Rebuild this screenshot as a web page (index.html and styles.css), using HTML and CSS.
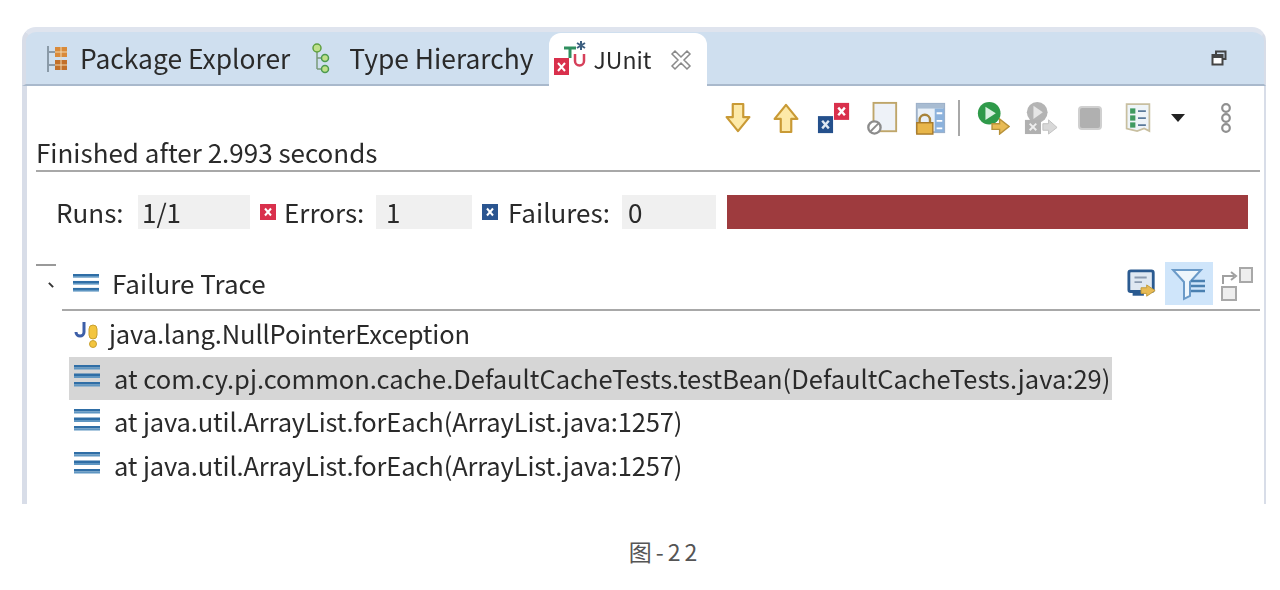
FILE: index.html
```html
<!DOCTYPE html>
<html lang="zh">
<head>
<meta charset="utf-8">
<title>JUnit</title>
<link rel="stylesheet" href="styles.css">
</head>
<body>
<svg class="defs" width="0" height="0" aria-hidden="true">
  <symbol id="lines" viewBox="0 0 26 22" preserveAspectRatio="none">
    <rect x="0" y="0" width="26" height="2.500" fill="#2f6ea6"/>
    <rect x="0" y="2.500" width="26" height="2" fill="#5f96c2"/>
    <rect x="0" y="8.500" width="26" height="2.500" fill="#2f6ea6"/>
    <rect x="0" y="11" width="26" height="2" fill="#5f96c2"/>
    <rect x="0" y="17" width="26" height="2.500" fill="#2f6ea6"/>
    <rect x="0" y="19.500" width="26" height="2" fill="#5f96c2"/>
  </symbol>
  <symbol id="xred" viewBox="0 0 16 16">
    <rect width="16" height="16" fill="#d9304c"/>
    <path d="M5 4.500l6 7M11 4.500l-6 7" stroke="#fff" stroke-width="2"/>
  </symbol>
  <symbol id="xblue" viewBox="0 0 16 16">
    <rect width="16" height="16" fill="#2a5590"/>
    <path d="M5 4.500l6 7M11 4.500l-6 7" stroke="#fff" stroke-width="2"/>
  </symbol>
</svg>
<main class="view">
  <div class="tabbar">
    <div class="tab">
      <svg class="ti ti-pkg" width="22" height="28" viewBox="0 0 22 28"><path d="M2 1v26M2 7h8M2 20h8" stroke="#8a9aa8" stroke-width="2" fill="none"/><rect x="9" y="2" width="12" height="10" fill="#d98a3a"/><rect x="9" y="15" width="12" height="10" fill="#c2702a"/><path d="M15 2v23M9 7h12M9 20h12" stroke="#f0d8b0"/></svg>
      <span>Package Explorer</span>
    </div>
    <div class="tab">
      <svg class="ti ti-type" width="20" height="32" viewBox="0 0 20 32"><path d="M6 6v20M6 15h7M6 26h7" stroke="#7a9a7a" stroke-width="1.500" fill="none"/><circle cx="6" cy="5" r="4" fill="#bfe08a" stroke="#5fa040" stroke-width="1.500"/><circle cx="14" cy="15" r="3.500" fill="#bfe08a" stroke="#4c9a50" stroke-width="1.500"/><circle cx="14" cy="26" r="3.500" fill="#bfe08a" stroke="#4c9a50" stroke-width="1.500"/></svg>
      <span>Type Hierarchy</span>
    </div>
    <div class="tab active">
      <svg class="ti junit" width="34" height="36" viewBox="0 0 34 36"><rect x="0" y="18" width="15" height="17" fill="#d9304c"/><path d="M4 23l7 8M11 23l-7 8" stroke="#fff" stroke-width="2"/><path d="M10 8h12M16 8v10" stroke="#2f8f5f" stroke-width="3" fill="none"/><path d="M21 14v7a4.500 4.500 0 0 0 9 0v-7" stroke="#d6405a" stroke-width="2.500" fill="none"/><path d="M27 1v9M23 3l8 5M31 3l-8 5" stroke="#3c5f80" stroke-width="2"/></svg>
      <span class="jtext">JUnit</span>
      <svg class="close" width="22" height="22" viewBox="0 0 22 22"><path d="M2 5l3-3 6 6 6-6 3 3-6 6 6 6-3 3-6-6-6 6-3-3 6-6z" fill="none" stroke="#8a8a8a" stroke-width="1.500"/></svg>
    </div>
    <svg class="restore" width="16" height="16" viewBox="0 0 16 16"><path d="M5 4V1.500h9.500V9H12" fill="none" stroke="#444" stroke-width="2"/><rect x="1.500" y="5" width="10" height="9.500" fill="#fff" stroke="#444" stroke-width="2"/><rect x="1.500" y="5" width="10" height="3" fill="#444"/></svg>
  </div>
  <div class="body">
    <div class="toolbar">
      <span class="slot"><svg width="28" height="32" viewBox="0 0 32 36"><path d="M10 2h12v15h7L16 33 3 17h7z" fill="#fde9a8" stroke="#c99a35" stroke-width="2.500" stroke-linejoin="round"/></svg></span>
      <span class="slot"><svg width="28" height="32" viewBox="0 0 32 36"><path d="M10 34h12V19h7L16 3 3 19h7z" fill="#fde9a8" stroke="#c99a35" stroke-width="2.500" stroke-linejoin="round"/></svg></span>
      <span class="slot"><svg width="34" height="34" viewBox="0 0 36 36"><rect x="1" y="16" width="16" height="18" fill="#24508c"/><path d="M5.500 21l7 8M12.500 21l-7 8" stroke="#dfe8f2" stroke-width="2.500"/><rect x="18" y="2" width="16" height="18" fill="#d9304c"/><path d="M22.500 7l7 8M29.500 7l-7 8" stroke="#fff" stroke-width="2.500"/></svg></span>
      <span class="slot"><svg width="32" height="34" viewBox="0 0 32 36"><rect x="7" y="2" width="24" height="30" fill="#eef2f8" stroke="#bfa66a" stroke-width="2"/><circle cx="8" cy="28" r="6.500" fill="#fff" stroke="#8c8c8c" stroke-width="2.500"/><path d="M4 32l8-8" stroke="#8c8c8c" stroke-width="2"/></svg></span>
      <span class="slot"><svg width="32" height="34" viewBox="0 0 32 36"><rect x="2" y="3" width="29" height="30" fill="#e8f0f8" stroke="#9db0c8" stroke-width="2"/><rect x="2" y="3" width="29" height="5" fill="#a8bcd2"/><rect x="21" y="8" width="10" height="25" fill="#8cb2dc"/><path d="M23 13h6M23 21h6M23 29h6" stroke="#fff" stroke-width="2"/><path d="M5 24v-4a5.500 5.500 0 0 1 11 0v4" fill="none" stroke="#a8843a" stroke-width="2.500"/><rect x="2" y="23" width="17" height="12" fill="#e8b64a" stroke="#a87a2a" stroke-width="1.500"/></svg></span>
      <i class="sep"></i>
      <span class="slot"><svg width="34" height="34" viewBox="0 0 36 36"><circle cx="14" cy="13" r="12" fill="#2f9a4a"/><path d="M10 6l11 7-11 7z" fill="#d8f0e0"/><path d="M17 24h8v-5l10 8-10 8v-5h-8z" fill="#e8bb55" stroke="#b8923a" stroke-width="1.500"/></svg></span>
      <span class="slot"><svg width="34" height="34" viewBox="0 0 36 36"><circle cx="14" cy="12" r="11" fill="#b4b4b4"/><path d="M10 5l10 7-10 7z" fill="#e6e6e6"/><rect x="1" y="20" width="17" height="15" fill="#b0b0b0"/><path d="M6 24l7 7M13 24l-7 7" stroke="#eee" stroke-width="2"/><path d="M20 24h6v-4l9 8-9 7v-4h-6z" fill="#d8d8d8" stroke="#c0c0c0"/></svg></span>
      <span class="slot stop"><svg width="26" height="26" viewBox="0 0 26 26"><rect x="2" y="2" width="22" height="22" rx="3" fill="#b0b0b0" stroke="#d0d0d0" stroke-width="2"/></svg></span>
      <span class="slot"><svg width="28" height="32" viewBox="0 0 32 36"><path d="M3 2h26v31l-6-3-8 3-12-3z" fill="#eef4f8" stroke="#c8bfa0" stroke-width="2"/><rect x="7" y="7" width="6" height="6" fill="#3f9a60"/><rect x="7" y="15" width="6" height="6" fill="#3f9a60"/><rect x="7" y="23" width="6" height="6" fill="#3f9a60"/><path d="M16 10h9M16 18h9M16 26h9" stroke="#5a7a9a" stroke-width="2"/></svg></span>
      <i class="caret"></i>
      <span class="slot chain"><svg width="12" height="30" viewBox="0 0 12 30"><circle cx="6" cy="5" r="3.800" fill="none" stroke="#909090" stroke-width="2.200"/><circle cx="6" cy="15" r="3.800" fill="none" stroke="#909090" stroke-width="2.200"/><circle cx="6" cy="25" r="3.800" fill="none" stroke="#909090" stroke-width="2.200"/></svg></span>
    </div>
    <div class="status">Finished after 2.993 seconds</div>
    <div class="counters">
      <span class="lbl runs">Runs:</span><span class="val v1">1/1</span>
      <svg class="sq"><use href="#xred"/></svg>
      <span class="lbl errs">Errors:</span><span class="val v2">1</span>
      <svg class="sq"><use href="#xblue"/></svg>
      <span class="lbl fails">Failures:</span><span class="val v3">0</span>
      <div class="bar"></div>
    </div>
    <div class="tracehead">
      <i class="dash"></i>
      <span class="tw"></span>
      <svg class="li-head" width="26" height="18"><use href="#lines"/></svg>
      <span class="ttl">Failure Trace</span>
      <div class="traceicons">
        <svg width="30" height="32" viewBox="0 0 32 32"><rect x="2" y="2" width="26" height="22" rx="2" fill="#dfe8f2" stroke="#2a5a90" stroke-width="3"/><path d="M8 9h13M8 14h8" stroke="#8a9ab0" stroke-width="2"/><path d="M6 27h12" stroke="#2a5a90" stroke-width="3"/><path d="M15 20h6v-3l9 6-9 6v-3h-6z" fill="#e8bb55" stroke="#c09a3a"/></svg>
        <span class="filter"><svg width="36" height="34" viewBox="0 0 36 34"><path d="M2 3h28L19 15v14l-6 3V15z" fill="#eef6fc" stroke="#6a9ac8" stroke-width="2"/><path d="M20 14h14M20 19h14M20 24h14" stroke="#4a80b0" stroke-width="2.500"/></svg></span>
        <svg width="32" height="34" viewBox="0 0 32 34"><rect x="19" y="1" width="12" height="14" fill="#eee" stroke="#a8a8a8" stroke-width="2"/><rect x="1" y="20" width="14" height="13" fill="#eee" stroke="#a8a8a8" stroke-width="2"/><path d="M2 17V9h11M10 5l5 4-5 4" fill="none" stroke="#a0a0a0" stroke-width="2"/></svg>
      </div>
    </div>
    <ul class="trace">
      <li class="first tight">
        <svg width="30" height="30" viewBox="0 0 30 28"><path d="M10 2v10a4 4 0 0 1-8 0" fill="none" stroke="#3d5fa8" stroke-width="3"/><rect x="15" y="5" width="8" height="14" rx="4" fill="#f3c53f" stroke="#c8a030"/><circle cx="19" cy="24" r="3.500" fill="#f3c53f" stroke="#c8a030"/></svg>
        <span>java.lang.NullPointerException</span>
      </li>
      <li class="sel"><svg class="li" width="26" height="22"><use href="#lines"/></svg><span>at com.cy.pj.common.cache.DefaultCacheTests.testBean(DefaultCacheTests.java:29)</span></li>
      <li class="tight"><svg class="li" width="26" height="22"><use href="#lines"/></svg><span>at java.util.ArrayList.forEach(ArrayList.java:1257)</span></li>
      <li class="tight"><svg class="li" width="26" height="22"><use href="#lines"/></svg><span>at java.util.ArrayList.forEach(ArrayList.java:1257)</span></li>
    </ul>
  </div>
</main>
<p class="caption">图-22</p>
</body>
</html>
```

FILE: styles.css
```css
* { box-sizing: border-box; }
html, body { margin: 0; padding: 0; background: #fff; }
body { width: 1280px; height: 590px; overflow: hidden; font-family: "Noto Sans CJK SC", "Noto Sans", sans-serif; color: #2a2a2a; }
.defs { position: absolute; }
.view { margin: 27px 0 0 22px; width: 1244px; height: 477px; display: flex; flex-direction: column; filter: blur(0.5px); }
.tabbar { height: 59px; display: flex; align-items: stretch; padding: 1px 0 0 20px; background: #cfdfef; border-top: 5px solid #dfe4ee; border-left: 4px solid #d8dde8; border-right: 2px solid #d8dde8; border-bottom: 2px solid #a9b9cc; border-radius: 14px 14px 0 0; position: relative; font-size: 26.400px; }
.tab { display: flex; align-items: center; margin-right: 21px; line-height: 1; white-space: nowrap; }
.ti { flex: none; }
.ti-pkg { margin-right: 12px; }
.ti-type { margin-right: 18px; }
.tab:nth-child(2) { margin-right: 15px; }
.tab.active { background: #fff; border-radius: 12px 12px 0 0; margin: 0 0 -2px 0; padding: 0 15px 0 5px; height: 53px; }
.junit { margin-bottom: 3px; margin-right: 6px; }
.jtext { font-size: 23px; }
.close { margin-left: 19px; flex: none; }
.restore { position: absolute; right: 37px; top: 18px; }
.body { flex: 1; border-left: 5px solid #d8dde8; border-right: 2px solid #d8dde8; padding-left: 9px; display: flex; flex-direction: column; }
.toolbar { height: 55px; display: flex; align-items: center; justify-content: flex-end; padding-right: 14px; padding-top: 8px; }
.slot { width: 48px; flex: none; display: flex; align-items: center; justify-content: center; }
.sep { width: 2px; height: 36px; background: #a8a8a8; margin: 0 9px 0 4px; flex: none; }
.stop { margin-left: 1px; }
.caret { width: 32px; height: 8px; flex: none; position: relative; }
.caret::after { content: ""; position: absolute; left: 9px; top: 0; border: 7px solid transparent; border-top: 8px solid #222; border-bottom: 0; }
.chain { margin-left: 8px; }
.status { height: 31px; font-size: 26px; line-height: 22px; border-bottom: 2px solid #a8a8a8; margin-right: 4px; white-space: nowrap; }
.counters { margin-top: 23px; height: 34px; display: flex; align-items: center; font-size: 26px; padding-left: 20px; padding-right: 16px; line-height: 34px; }
.lbl { white-space: nowrap; align-self: flex-start; }
.runs { width: 82px; }
.errs { width: 92px; margin-left: 8px; }
.fails { width: 114px; margin-left: 10px; }
.val { height: 34px; background: #f0f0f0; padding-left: 4px; }
.v1 { width: 112px; }
.v2 { width: 96px; padding-left: 10px; }
.v3 { width: 94px; padding-left: 6px; }
.sq { width: 16px; height: 16px; flex: none; margin-left: 10px; }
.bar { flex: 1; height: 34px; margin-left: 11px; background: #9e3b3e; }
.tracehead { position: relative; margin-top: 29px; height: 53px; margin-left: 26px; margin-right: 4px; border-bottom: 2px solid #a8a8a8; display: flex; align-items: center; padding-left: 11px; font-size: 26px; line-height: 1; }
.dash { position: absolute; left: -26px; top: 6px; width: 20px; height: 2px; background: #999; }
.tw { position: absolute; left: -14px; top: 26px; width: 6px; height: 2px; background: #333; transform: rotate(45deg); }
.li-head { flex: none; margin-bottom: 2px; }
.ttl { margin-left: 13px; margin-bottom: 2px; }
.traceicons { margin-left: auto; display: flex; align-items: center; padding-right: 7px; gap: 8px; }
.filter { width: 48px; height: 43px; background: #cfe5fa; display: flex; align-items: center; justify-content: center; }
.trace { list-style: none; margin: 0; padding: 2px 0 0 33px; font-size: 25.500px; line-height: 1; }
.trace li { height: 43.500px; display: flex; align-items: center; width: 1043px; padding-left: 5px; white-space: nowrap; }
.trace .tight { letter-spacing: -0.140px; }
.trace .li { margin-right: 14px; flex: none; margin-bottom: 4px; }
.trace .first svg { margin-right: 7px; flex: none; margin-bottom: 2px; }
.first span { margin-left: -2px; margin-bottom: 2px; }
.trace li span { margin-top: -2px; }
.sel { background: #d6d6d6; }
.caption { margin: 33px 0 0 0; text-align: center; padding-left: 50px; font-size: 23px; line-height: 28px; color: #555; letter-spacing: 4px; }
```
